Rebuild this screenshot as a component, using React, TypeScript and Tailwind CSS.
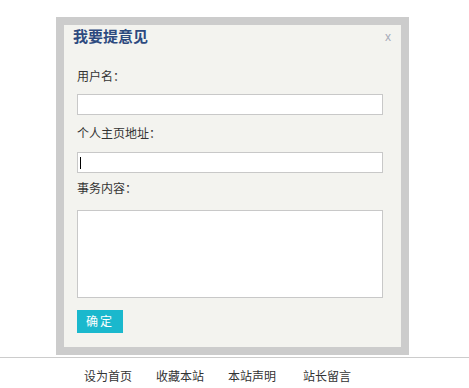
export default function App() {
  const font = { fontFamily: '"Liberation Sans", "Noto Sans CJK SC", sans-serif' }
  return (
    <div className="min-h-[388px] bg-white text-[#333] text-[12px]" style={font}>
      <div className="pt-[17px] pl-[56px]">
        <div className="w-[353px] border-8 border-[#cccccc] bg-[#f3f3ef]">
          <div className="pl-[9px] pr-[17px] pb-[14px]">
            <div className="flex h-[24px] items-center justify-between">
              <span className="text-[15px] font-bold text-[#2d4a7f] leading-[24px]">我要提意见</span>
              <span className="text-[12px] text-[#a6aab8] leading-none -mr-[7px]">x</span>
            </div>
            <div className="pl-[4px]">
              <div className="mt-[18px] leading-[20px]">用户名：</div>
              <input className="mt-[7px] block h-[21px] w-[306px] border border-[#c8c8c8] bg-white outline-none" />
              <div className="mt-[9px] leading-[20px]">个人主页地址：</div>
              <div className="relative mt-[8px] w-[306px]">
                <input className="block h-[21px] w-[306px] border border-[#c8c8c8] bg-white outline-none" />
                <span className="absolute left-[3px] top-[5px] h-[12px] w-px bg-black" />
              </div>
              <div className="mt-[6px] leading-[20px]">事务内容：</div>
              <textarea className="mt-[11px] block h-[88px] w-[306px] resize-none border border-[#c8c8c8] bg-white outline-none" />
              <button className="mt-[12px] block h-[23px] w-[46px] bg-[#1ab8cd] text-white text-[12px] tracking-[2px]">确定</button>
            </div>
          </div>
        </div>
      </div>
      <div className="mt-[2px] border-t border-[#cccccc]">
        <div className="flex pl-[84px] gap-[24px] pt-[11px] leading-[16px]">
          <span>设为首页</span>
          <span>收藏本站</span>
          <span>本站声明</span>
          <span className="ml-[3px]">站长留言</span>
        </div>
      </div>
    </div>
  )
}
